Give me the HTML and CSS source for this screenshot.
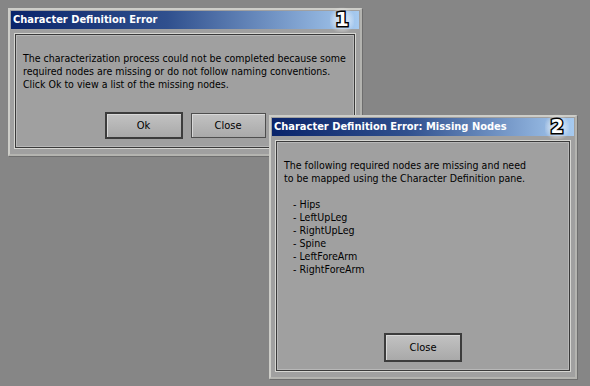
FILE: index.html
```html
<!DOCTYPE html>
<html>
<head>
    <title>Character Definition Error</title>
    <link rel="stylesheet" href="styles.css">
</head>
<body>
  <div class="desktop">

    <!-- first dialog -->
    <div class="dialog dialog-one">
      <div class="title-bar">Character Definition Error</div>
      <span class="badge">1</span>
      <div class="dialog-body">
        <div class="panel">
          <p class="message">The characterization process could not be completed because some<br>required nodes are missing or do not follow naming conventions.<br>Click Ok to view a list of the missing nodes.</p>
          <div class="button-row">
            <button class="btn btn-default">Ok</button>
            <button class="btn">Close</button>
          </div>
        </div>
      </div>
    </div>

    <!-- second dialog, on top -->
    <div class="dialog dialog-two">
      <div class="title-bar">Character Definition Error: Missing Nodes</div>
      <span class="badge">2</span>
      <div class="dialog-body">
        <div class="panel">
          <p class="message">The following required nodes are missing and need<br>to be mapped using the Character Definition pane.</p>
          <ul class="node-list">
            <li>- Hips</li>
            <li>- LeftUpLeg</li>
            <li>- RightUpLeg</li>
            <li>- Spine</li>
            <li>- LeftForeArm</li>
            <li>- RightForeArm</li>
          </ul>
          <div class="button-row">
            <button class="btn btn-default">Close</button>
          </div>
        </div>
      </div>
    </div>

  </div>
</body>
</html>
```

FILE: styles.css
```css
/* Desktop with two stacked error windows */
body {
    margin: 0;
    background-color: #868686;
    font-family: 'DejaVu Sans Condensed', 'Liberation Sans', sans-serif;
    color: #000;
}

.desktop {
    position: relative;
    width: 590px;
    height: 386px;
    overflow: hidden;
}

/* window frame */
.dialog {
    position: absolute;
    box-sizing: border-box;
    display: flex;
    flex-direction: column;
    background-color: #a0a0a0;
    border: 2px solid #cdcdc8;
    border-right-color: #b4b4b0;
    border-bottom-color: #b4b4b0;
    padding: 1px;
    box-shadow: 1px 1px 0 #6e6e6e;
}

.dialog-one {
    left: 8px;
    top: 8px;
    width: 354px;
    height: 148px;
}

.dialog-two {
    left: 269px;
    top: 115px;
    width: 308px;
    height: 264px;
}

.title-bar {
    height: 18px;
    line-height: 18px;
    padding-left: 2px;
    color: #fff;
    font-family: 'DejaVu Sans Condensed', 'Liberation Sans', sans-serif;
    font-weight: bold;
    font-size: 11px;
    background: linear-gradient(to right, #0a246a 0%, #30508e 45%, #a6caf0 100%);
    white-space: nowrap;
}

/* numbered callout with glow */
.badge {
    position: absolute;
    top: -4px;
    right: 6px;
    width: 24px;
    height: 26px;
    line-height: 26px;
    text-align: center;
    font-family: 'DejaVu Sans', sans-serif;
    font-weight: bold;
    font-size: 19px;
    color: #fff;
    -webkit-text-stroke: 3px #000;
    paint-order: stroke fill;
    background: radial-gradient(circle at 50% 55%, rgba(255,255,255,0.75) 0%, rgba(255,255,255,0.35) 45%, rgba(255,255,255,0) 72%);
}

.dialog-body {
    flex: 1;
    display: flex;
    padding: 5px 4px 5px 4px;
}

/* etched group box */
.panel {
    flex: 1;
    min-width: 0;
    display: flex;
    flex-direction: column;
    border: 1px solid #3a3a3a;
    box-shadow: 0 0 0 1px #d6d6d2, inset 0 0 0 1px #b8b8b8;
    padding: 0 7px;
}

.message {
    margin: 17px 0 0 0;
    font-size: 10.5px;
    line-height: 13px;
    white-space: nowrap;
}

.node-list {
    list-style: none;
    margin: 13px 0 0 0;
    padding: 0 0 0 9px;
    font-size: 10.6px;
    line-height: 13px;
}

.button-row {
    margin-top: auto;
    margin-bottom: 8px;
    display: flex;
    justify-content: center;
    gap: 8px;
}

.btn {
    box-sizing: border-box;
    width: 75px;
    height: 25px;
    margin: 1px 0;
    font-family: 'DejaVu Sans Condensed', 'Liberation Sans', sans-serif;
    font-size: 11px;
    color: #000;
    background: linear-gradient(#c2c2c2, #a9a9a9);
    border: 1px solid #4e4e4e;
    box-shadow: inset 1px 1px 0 #d8d8d8;
    padding: 0;
}

.btn-default {
    width: 78px;
    height: 27px;
    margin: 0;
    border: 2px solid #3c3c3c;
}

.dialog-two .btn-default {
    height: 29px;
}
```
